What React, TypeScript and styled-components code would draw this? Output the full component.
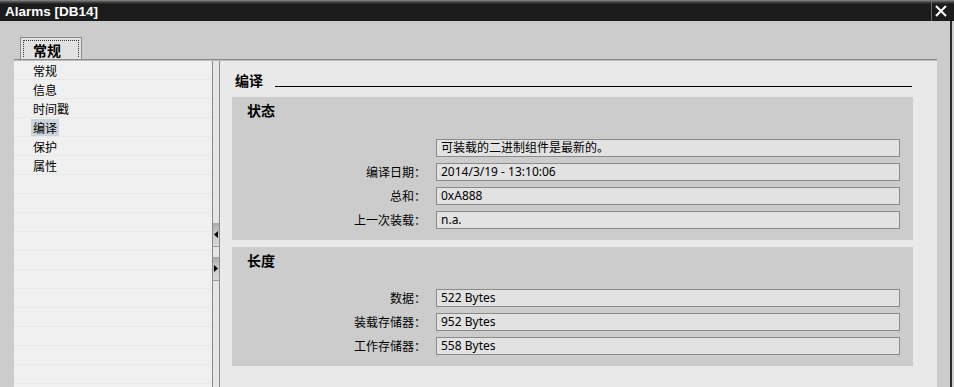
import styled, { createGlobalStyle } from "styled-components";

const GlobalStyle = createGlobalStyle`
  html, body {
    margin: 0;
    padding: 0;
    background: #cccccc;
    overflow: hidden;
  }
  * {
    box-sizing: border-box;
  }
`;

const navItems = ["常规", "信息", "时间戳", "编译", "保护", "属性"];
const selectedNav = "编译";

const statusFields = [
  { label: "", value: "可装载的二进制组件是最新的。" },
  { label: "编译日期：", value: "2014/3/19 - 13:10:06" },
  { label: "总和：", value: "0xA888" },
  { label: "上一次装载：", value: "n.a." },
];

const lengthFields = [
  { label: "数据：", value: "522 Bytes" },
  { label: "装载存储器：", value: "952 Bytes" },
  { label: "工作存储器：", value: "558 Bytes" },
];

const App = () => {
  return (
    <Window>
      <GlobalStyle />
      <TitleBar>
        <TitleText>Alarms [DB14]</TitleText>
        <CloseButton aria-label="close">
          <svg width="12" height="12" viewBox="0 0 12 12">
            <path
              d="M1 1 L11 11 M11 1 L1 11"
              stroke="#ffffff"
              strokeWidth="2"
              fill="none"
            />
          </svg>
        </CloseButton>
      </TitleBar>

      <Body>
        <TabStrip>
          <Tab>
            <TabLabel>常规</TabLabel>
          </Tab>
        </TabStrip>

        <Pane>
          <NavList>
            {navItems.map((item) => (
              <NavRow key={item}>
                <NavLabel $selected={item === selectedNav}>{item}</NavLabel>
              </NavRow>
            ))}
            {Array.from({ length: 12 }).map((_, i) => (
              <NavRow key={"empty" + i} />
            ))}
          </NavList>

          <Splitter>
            <SplitButton $top={162}>
              <svg width="4" height="7" viewBox="0 0 4 7">
                <path d="M4 0 L0 3.5 L4 7 Z" fill="#000" />
              </svg>
            </SplitButton>
            <SplitButton $top={10}>
              <svg width="4" height="7" viewBox="0 0 4 7">
                <path d="M0 0 L4 3.5 L0 7 Z" fill="#000" />
              </svg>
            </SplitButton>
          </Splitter>

          <Content>
            <Heading>
              <HeadingText>编译</HeadingText>
              <HeadingRule />
            </Heading>

            <Section>
              <SectionTitle>状态</SectionTitle>
              <FieldGrid>
                {statusFields.map((f) => (
                  <FieldRow key={f.value}>
                    <FieldLabel>{f.label}</FieldLabel>
                    <FieldBox>{f.value}</FieldBox>
                  </FieldRow>
                ))}
              </FieldGrid>
            </Section>

            <Section>
              <SectionTitle>长度</SectionTitle>
              <FieldGrid>
                {lengthFields.map((f) => (
                  <FieldRow key={f.value}>
                    <FieldLabel>{f.label}</FieldLabel>
                    <FieldBox>{f.value}</FieldBox>
                  </FieldRow>
                ))}
              </FieldGrid>
            </Section>
          </Content>
        </Pane>
      </Body>
    </Window>
  );
};

const Window = styled.div`
  width: 954px;
  height: 387px;
  display: flex;
  flex-direction: column;
  background: #cccccc;
  overflow: hidden;
  font-family: "Noto Sans", "Noto Sans CJK SC", sans-serif;
`;

const TitleBar = styled.div`
  height: 21px;
  flex-shrink: 0;
  display: flex;
  align-items: center;
  justify-content: space-between;
  padding: 0 5px 0 5px;
  background: linear-gradient(
    to bottom,
    #8a8a8a 0px,
    #4a4a4a 2px,
    #1c1c1c 4px,
    #1c1c1c 100%
  );
`;

const TitleText = styled.span`
  color: #ffffff;
  font-family: "Liberation Sans", "Noto Sans", sans-serif;
  font-weight: bold;
  font-size: 13.5px;
  line-height: 16px;
  padding-top: 2px;
`;

const CloseButton = styled.div`
  width: 18px;
  height: 21px;
  display: flex;
  align-items: center;
  justify-content: center;
  border-left: 1px solid #6a6a6a;
  padding-top: 1px;
`;

const Body = styled.div`
  flex: 1;
  display: flex;
  flex-direction: column;
  padding: 16px 0 0 14px;
  border-right: 2px solid #2a2a2a;
  margin-right: 2px;
  min-height: 0;
`;

const TabStrip = styled.div`
  display: flex;
  padding-left: 6px;
`;

const Tab = styled.div`
  width: 62px;
  height: 22px;
  padding: 2px;
  background: #e2e2e2;
  border: 1px solid #8c8c8c;
  border-bottom: none;
`;

const TabLabel = styled.div`
  height: 100%;
  border: 1px dotted #333333;
  border-bottom: none;
  padding-left: 9px;
  font-family: "Noto Sans CJK SC", sans-serif;
  font-weight: bold;
  font-size: 14px;
  line-height: 18px;
  color: #000000;
`;

const Pane = styled.div`
  flex: 1;
  width: 923px;
  display: grid;
  grid-template-columns: 198px 8px 717px;
  border-top: 1px solid #8a8a8a;
  box-shadow: inset 0 1px 0 #bdbdbd;
  padding-top: 1px;
  min-height: 0;
`;

const NavList = styled.div`
  background: #f0f0f0;
  display: flex;
  flex-direction: column;
  overflow: hidden;
`;

const NavRow = styled.div`
  height: 19px;
  flex-shrink: 0;
  border-bottom: 1px solid #e8e8e8;
  padding-left: 19px;
  display: flex;
  align-items: center;
`;

const NavLabel = styled.span<{ $selected?: boolean }>`
  font-family: "Noto Sans CJK SC", sans-serif;
  font-size: 12px;
  line-height: 17px;
  color: #000000;
  padding: 0 2px;
  margin-left: -2px;
  background: ${(p) => (p.$selected ? "#cbd3db" : "transparent")};
`;

const Splitter = styled.div`
  background: #e6e6e6;
  border-left: 1px solid #8a8a8a;
  border-right: 1px solid #8a8a8a;
  display: flex;
  flex-direction: column;
`;

const SplitButton = styled.div<{ $top: number }>`
  margin-top: ${(p) => p.$top}px;
  height: 24px;
  display: flex;
  align-items: center;
  justify-content: center;
  background: linear-gradient(to bottom, #a9a9a9 0px, #c4c4c4 9px, #dadada 100%);
  border-bottom: 1px solid #9a9a9a;
`;

const Content = styled.div`
  background: #e9e9e9;
  display: flex;
  flex-direction: column;
  gap: 7px;
  padding: 0 24px 0 12px;
`;

const Heading = styled.div`
  height: 28px;
  display: flex;
  align-items: flex-end;
  padding-left: 3px;
  margin-bottom: 1px;
`;

const HeadingText = styled.span`
  font-family: "Noto Sans CJK SC", sans-serif;
  font-weight: bold;
  font-size: 14px;
  line-height: 18px;
  color: #000000;
`;

const HeadingRule = styled.div`
  flex: 1;
  border-bottom: 1px solid #000000;
  margin: 0 1px 2px 12px;
`;

const Section = styled.div`
  background: #cccccc;
  padding: 3px 13px 11px 15px;
  display: flex;
  flex-direction: column;
`;

const SectionTitle = styled.div`
  font-family: "Noto Sans CJK SC", sans-serif;
  font-weight: bold;
  font-size: 14px;
  line-height: 20px;
  color: #000000;
  margin-bottom: 19px;
`;

const FieldGrid = styled.div`
  display: flex;
  flex-direction: column;
  gap: 6px;
`;

const FieldRow = styled.div`
  display: grid;
  grid-template-columns: 179px 464px;
  column-gap: 10px;
  align-items: center;
`;

const FieldLabel = styled.span`
  text-align: right;
  font-family: "Noto Sans CJK SC", sans-serif;
  font-size: 12px;
  line-height: 18px;
  color: #000000;
`;

const FieldBox = styled.div`
  height: 18px;
  border: 1px solid #8a8a8a;
  background: #e2e2e2;
  padding-left: 4px;
  font-family: "Noto Sans", "Noto Sans CJK SC", sans-serif;
  font-size: 12px;
  line-height: 16px;
  color: #000000;
  white-space: nowrap;
  overflow: hidden;
`;

export default App;
